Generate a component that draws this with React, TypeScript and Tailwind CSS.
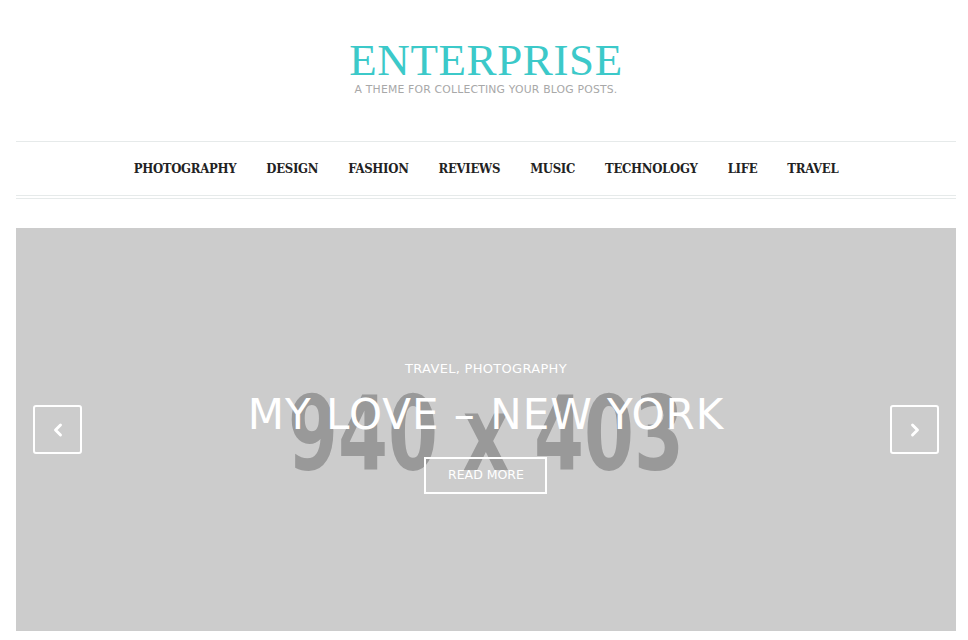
import { ChevronLeft, ChevronRight } from 'lucide-react';

const navItems = ['Photography', 'Design', 'Fashion', 'Reviews', 'Music', 'Technology', 'Life', 'Travel'];

export default function App() {
  return (
    <div className="min-h-screen bg-white font-['Liberation_Sans',sans-serif]">
      <div className="ml-4 w-[940px]">
        {/* Branding */}
        <header className="flex flex-col items-center pt-[36px] pb-[45px]">
          <h1 className="font-['Liberation_Serif',serif] text-[45px] leading-[48px] tracking-[0.6px] text-[#3cc9c9]">
            ENTERPRISE
          </h1>
          <p className="font-['DejaVu_Sans',sans-serif] text-[10.8px] leading-3 tracking-[0.2px] text-[#a8a8a8]">
            A THEME FOR COLLECTING YOUR BLOG POSTS.
          </p>
        </header>

        {/* Navigation */}
        <nav className="border-t border-[#e6eaea]">
          <ul className="flex h-[53px] items-center justify-center gap-[30px]">
            {navItems.map((item) => (
              <li
                key={item}
                className="font-['DejaVu_Serif_Condensed','DejaVu_Serif',serif] text-[13px] font-bold uppercase tracking-[-0.3px] text-[#222]"
              >
                {item}
              </li>
            ))}
          </ul>
          <div className="h-[4px] border-y border-[#e6eaea]" />
        </nav>

        {/* Slider */}
        <section className="mt-[29px] relative flex h-[403px] items-center justify-center overflow-hidden bg-[#cccccc]">
          <span className="absolute inset-0 flex items-center justify-center pt-[8px] font-['DejaVu_Sans',sans-serif] text-[104px] font-bold text-[#999999] scale-x-[0.69]">
            940 x 403
          </span>

          <button className="absolute left-[17px] top-[177px] flex h-[49px] w-[49px] items-center justify-center rounded-[3px] border-2 border-white text-white">
            <ChevronLeft size={20} strokeWidth={3.5} />
          </button>
          <button className="absolute right-[17px] top-[177px] flex h-[49px] w-[49px] items-center justify-center rounded-[3px] border-2 border-white text-white">
            <ChevronRight size={20} strokeWidth={3.5} />
          </button>

          <div className="relative flex flex-col items-center pb-[4px] text-white">
            <p className="font-['DejaVu_Sans',sans-serif] text-[13px] leading-4 tracking-[0.3px]">TRAVEL, PHOTOGRAPHY</p>
            <h2 className="mt-[14px] font-['DejaVu_Sans',sans-serif] text-[42px] leading-[48px] tracking-[1px]">
              MY LOVE – NEW YORK
            </h2>
            <button className="mt-[18px] h-[37px] w-[123px] border-2 border-white font-['DejaVu_Sans',sans-serif] text-[12.5px] text-white">
              READ MORE
            </button>
          </div>
        </section>
      </div>
    </div>
  );
}
